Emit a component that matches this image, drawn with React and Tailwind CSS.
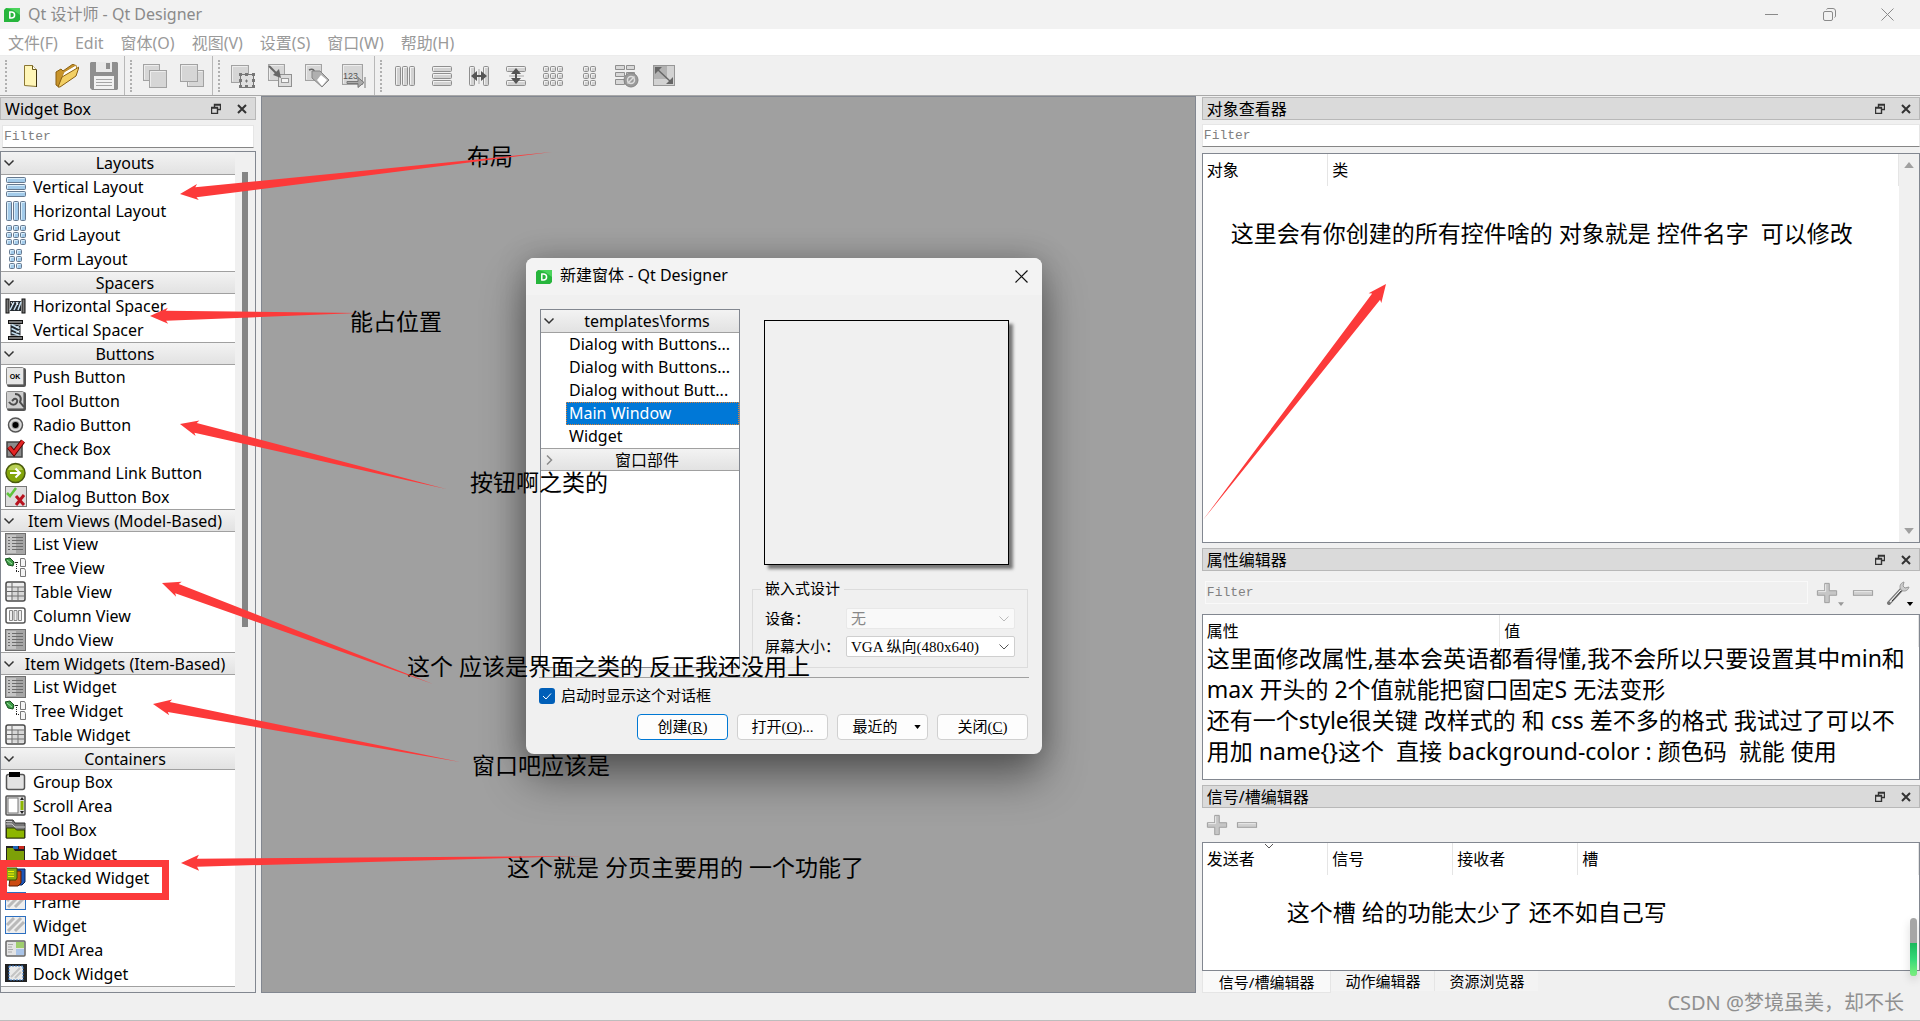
import React from 'react';

/* ---------- icons ---------- */

const Cells = ({ rects, tone = 'blue', className = 'h-5 w-5', children }) => {
  const fill = tone === 'blue' ? '#a3cbea' : '#d2d2d2';
  const light = tone === 'blue' ? '#d9edfa' : '#f2f2f2';
  const stroke = tone === 'blue' ? '#66798f' : '#8f8f8f';
  return (
    <svg viewBox="0 0 20 20" className={className} aria-hidden="true">
      {rects.map(([x, y, w, h], i) => (
        <g key={i}>
          <rect x={x + 0.5} y={y + 0.5} width={w - 1} height={h - 1} rx="1" fill={fill} stroke={stroke} />
          <path d={`M${x + 1.5} ${y + h - 1.5}V${y + 1.5}H${x + w - 1.5}`} fill="none" stroke={light} />
        </g>
      ))}
      {children}
    </svg>
  );
};

const COLUMNS = [[0, 0, 6, 20], [7, 0, 6, 20], [14, 0, 6, 20]];
const ROWS = [[0, 0, 20, 6], [0, 7, 20, 6], [0, 14, 20, 6]];
const GRID = [0, 7, 14].flatMap((y) => [0, 7, 14].map((x) => [x, y, 6, 6]));
const FORM = [0, 7, 14].flatMap((y) => [3, 10].map((x) => [x, y, 6, 6]));

const DesignerLogo = () => (
  <svg viewBox="0 0 16 14" className="h-[14px] w-4 shrink-0" aria-hidden="true">
    <path d="M2 0h14v12l-2 2H0V2z" fill="#27b53c" />
    <path d="M2 0h14v7L9 2z" fill="#4bd35c" />
    <path d="M5.8 3.5v7M5.3 4h2c4.4 0 4.4 6 0 6h-2" fill="none" stroke="#fff" strokeWidth="1.5" />
  </svg>
);

const Chevron = ({ open = true }) => (
  <svg viewBox="0 0 12 12" className="h-3 w-3" fill="none" aria-hidden="true">
    {open ? (
      <path d="M1.5 3.5L6 8l4.500-4.500" stroke="#333" strokeWidth="1.500" />
    ) : (
      <path d="M4 1.500L8.500 6L4 10.500" stroke="#8a8a8a" strokeWidth="1.500" />
    )}
  </svg>
);

const ListIcon = () => (
  <>
    <rect x="0.500" y="0.500" width="20" height="21" fill="#a6a6a6" stroke="#6e6e6e" />
    <rect x="2" y="2" width="9" height="18" fill="#c4c4c4" />
    {[4, 7, 10, 13, 16].map((y) => (
      <path key={y} d={`M3 ${y + 0.5}h2M7 ${y + 0.5}h11`} stroke="#6c6c6c" strokeWidth="1" />
    ))}
  </>
);

const TreeIcon = () => (
  <>
    <path d="M0 2l5-1 4 4-1 4-5-1z" fill="#3d9b46" stroke="#17501d" />
    <path d="M2 3l5 4" stroke="#9fe3a4" />
    <path d="M10 5.500h4M11.500 5v10M11 14.500h3" stroke="#222" strokeDasharray="1 1" />
    <path d="M15.500 1.500h4l1 2v6h-5zM15.500 11.500h4l1 2v6h-5z" fill="#f4f4f4" stroke="#777" />
  </>
);

const TableIcon = () => (
  <>
    <rect x="1" y="1" width="19" height="19" rx="2" fill="#ececec" stroke="#4a4a4a" strokeWidth="1.500" />
    <path d="M2 6h17M2 10.500h17M2 15h17M7 2v17M13 6v13" stroke="#666" />
    <path d="M7 6.500h12v12H7z" fill="#999" fillOpacity=".25" />
  </>
);

const StripedIcon = () => (
  <>
    <rect x="0.500" y="1.500" width="20" height="17" fill="#eee" stroke="#2c6fc0" />
    <path d="M2 10l7-7M3 16L16 3M10 16l9-9" stroke="#b9b9b9" strokeWidth="3" />
  </>
);

const SpacerIcon = () => (
  <>
    <rect x="1" y="4" width="3" height="14" fill="#777" stroke="#111" />
    <rect x="17" y="4" width="3" height="14" fill="#777" stroke="#111" />
    <path d="M5 6h11v10H5z" fill="#22282e" />
    <path d="M5 15l4-8M9 15l4-8M13 15l3-8" stroke="#c4dff0" strokeWidth="1.500" />
    <path d="M6 7l2 3M11 7l2 3" stroke="#fff" />
  </>
);

const widgetDrawings = {
  hspacer: <SpacerIcon />,
  vspacer: <g transform="rotate(90 10.500 11)"><SpacerIcon /></g>,
  push: (
    <>
      <rect x="2" y="2" width="19" height="19" rx="2" fill="#555" />
      <rect x="1.500" y="1.500" width="17" height="17" rx="1" fill="#e6e6e6" stroke="#888" />
      <text x="10" y="12.500" textAnchor="middle" fontSize="7" fontWeight="700" fontFamily="Liberation Sans, sans-serif">OK</text>
    </>
  ),
  tool: (
    <>
      <rect x="2" y="2" width="19" height="19" rx="2" fill="#555" />
      <rect x="1.500" y="1.500" width="17" height="17" rx="1" fill="#cfcfcf" stroke="#888" />
      <path d="M10 4c5 0 7 4 5 8l4 5M4 12c3 4 7 3 8 0 1-2-1-4-3-3l-2 2" fill="none" stroke="#4d4d4d" strokeWidth="2" />
    </>
  ),
  radio: (
    <>
      <circle cx="10.500" cy="11" r="7" fill="#d9d9d9" stroke="#555" strokeWidth="1.500" />
      <circle cx="10.500" cy="11" r="4" fill="#999" />
      <circle cx="10.500" cy="11" r="3" fill="#000" />
    </>
  ),
  check: (
    <>
      <rect x="2" y="4" width="15" height="15" fill="#8b8b8b" stroke="#444" strokeWidth="1.500" />
      <path d="M4 9l5 6 9-12" fill="none" stroke="#5b0000" strokeWidth="5" />
      <path d="M4 9l5 6 9-12" fill="none" stroke="#e32525" strokeWidth="3" />
    </>
  ),
  command: (
    <>
      <circle cx="10.500" cy="11" r="9.500" fill="#83a50a" stroke="#4a5a10" strokeWidth="1.500" />
      <path d="M3 8a8 8 0 0 1 15 0z" fill="#b8cf58" />
      <path d="M5 11h9M10.500 6.500L15 11l-4.500 4.500" fill="none" stroke="#fff" strokeWidth="2" />
    </>
  ),
  buttonbox: (
    <>
      <rect x="0.500" y="0.500" width="21" height="20" fill="#ddd" stroke="#777" />
      <path d="M2 7l3 3 6-8" fill="none" stroke="#5ec43a" strokeWidth="2.500" />
      <path d="M11 10l8 9M19 9l-8 10" stroke="#b81420" strokeWidth="3" />
    </>
  ),
  list: <ListIcon />,
  tree: <TreeIcon />,
  table: <TableIcon />,
  column: (
    <>
      <rect x="1" y="3" width="19" height="15" rx="2" fill="#fff" stroke="#555" strokeWidth="1.500" />
      <path d="M4.500 5.500h3v10h-3zM9 5.500h3v10H9zM13.500 5.500h3v10h-3z" fill="#eee" stroke="#888" />
    </>
  ),
  group: (
    <>
      <rect x="1.500" y="3.500" width="18" height="15" rx="2" fill="#e2e2e2" stroke="#555" strokeWidth="1.500" />
      <rect x="4" y="1" width="11" height="5" fill="#000" />
    </>
  ),
  scroll: (
    <>
      <rect x="1" y="1" width="19" height="19" rx="1" fill="#ddd" stroke="#555" strokeWidth="1.500" />
      <rect x="3" y="3" width="10" height="15" fill="#fff" stroke="#777" />
      <path d="M15.500 6h3v9h-3z" fill="#8db600" />
      <path d="M15 5l2-3 2 3zM15 16l2 3 2-3z" fill="#222" />
    </>
  ),
  toolbox: (
    <>
      <path d="M1 1h7l2 3h10v15H1z" fill="#777" stroke="#333" />
      <path d="M1 5h6l3 3h10M1 2.500h6" fill="none" stroke="#ccc" />
      <path d="M1.500 9h8l2 2h8v8h-18z" fill="#8db600" stroke="#2e3b05" />
    </>
  ),
  tab: (
    <>
      <path d="M1 3h19v15H1z" fill="#222" />
      <path d="M8 3h5v3H8z" fill="#1d62b5" />
      <path d="M14 3h5v3h-5z" fill="#c8281e" />
      <path d="M2 5h6l2 3h9v9H2z" fill="#7da008" />
    </>
  ),
  stacked: (
    <>
      <path d="M10 2h10v13l-3 3H8z" fill="#1c55b8" stroke="#0c2350" />
      <path d="M6 4h10v12l-3 3H4z" fill="#cc4a10" stroke="#5b1c00" />
      <path d="M1 1h11v10l-1 2H1z" fill="#86ab12" stroke="#3a4d05" />
      <path d="M3 4.500h6M3 7h6M3 9.500h6" stroke="#f2f200" />
    </>
  ),
  striped: <StripedIcon />,
  mdi: (
    <>
      <rect x="1" y="2" width="19" height="15" rx="1" fill="#e4e4e4" stroke="#666" strokeWidth="1.500" />
      <path d="M11 3h8v6h-8z" fill="#9fce6d" />
      <path d="M11 10h8v6h-8z" fill="#a9c4e8" />
      <path d="M3 5.500h5M3 8h4M3 10.500h5M3 13h4" stroke="#aaa" />
    </>
  ),
  dock: (
    <>
      <rect x="0" y="1" width="22" height="18" fill="#222" />
      <rect x="4" y="3" width="14" height="14" fill="#e9e9e9" stroke="#3a7bc8" strokeDasharray="2 1" />
      <path d="M6 14l9-9M10 15l6-6" stroke="#c4c4c4" strokeWidth="2" />
    </>
  ),
};

const layoutCells = { vlayout: ROWS, hlayout: COLUMNS, grid: GRID, form: FORM };

const WidgetIcon = ({ name }) =>
  layoutCells[name] ? (
    <Cells rects={layoutCells[name]} />
  ) : (
    <svg viewBox="0 0 22 22" className="h-[22px] w-[22px]" aria-hidden="true">
      {widgetDrawings[name]}
    </svg>
  );

const Sheet = ({ x, y, size = 17 }) => (
  <>
    <rect x={x + 0.5} y={y + 0.5} width={size} height={size} fill="#d6d6d6" stroke="#a2a2a2" />
    <path d={`M${x + 1.5} ${y + size - 0.5}V${y + 1.5}H${x + size - 0.5}`} fill="none" stroke="#ededed" />
  </>
);

const Tool = ({ children }) => (
  <svg viewBox="0 0 24 24" className="h-6 w-6" fill="none" aria-hidden="true">{children}</svg>
);

const toolGroups = [
  [
    ['New', (
      <Tool>
        <path d="M6.500 1.500h8l4 4v17l-12-1z" fill="#fff6b8" stroke="#8a7632" />
        <path d="M14.500 1.500v4h4" fill="#fffef0" stroke="#6d5a1c" />
        <path d="M18.500 6v17" stroke="#3d3210" />
      </Tool>
    )],
    ['Open', (
      <Tool>
        <path d="M1 21V8l5-3 2 2L18 0l3 2v4L4 23z" fill="#c8942a" stroke="#8a5f10" />
        <path d="M5 17L9 8 21 1l1 5z" fill="#fff" stroke="#b98a2a" />
        <path d="M3 23l4-10L24 3l-3 9L5 23z" fill="#f2cf64" stroke="#8a5f10" />
      </Tool>
    )],
    ['Save', (
      <svg viewBox="0 0 28 28" className="h-7 w-7" aria-hidden="true">
        <path d="M1 0h26l1 1v26l-1 1H2l-2-2V1z" fill="#8f8f8f" />
        <path d="M6 0h16v10H6z" fill="#e9e9e9" />
        <path d="M16 1h4v6h-4z" fill="#8f8f8f" />
        <path d="M4 14h20v13H4z" fill="#f2f2f2" />
        <path d="M6 17.500h16M6 20.500h16M6 23.500h16" stroke="#a5a5a5" />
      </svg>
    )],
  ],
  [
    ['Send to back', <Tool><Sheet x={0} y={0} size={16} /><Sheet x={6} y={6} /></Tool>],
    ['Bring to front', <Tool><Sheet x={7} y={6} size={16} /><Sheet x={0} y={0} /></Tool>],
  ],
  [
    ['Edit widgets', (
      <Tool>
        <Sheet x={0} y={1} />
        <rect x="9.500" y="10.500" width="13" height="13" fill="#e0e0e0" stroke="#777" />
        {[[8, 9], [14, 9], [21, 9], [8, 15], [21, 15], [8, 21], [14, 21], [21, 21]].map(([x, y]) => (
          <rect key={`${x}-${y}`} x={x} y={y} width="3" height="3" fill="#777" />
        ))}
        <path d="M14 17h3M15.500 15.500v3" stroke="#777" />
      </Tool>
    )],
    ['Edit signals and slots', (
      <Tool>
        <Sheet x={0} y={0} size={16} />
        <rect x="10.500" y="10.500" width="13" height="12" fill="#ddd" stroke="#909090" />
        <rect x="13.500" y="14.500" width="7" height="4" fill="#f4f4f4" stroke="#999" />
        <path d="M1 2l9 9" stroke="#666" strokeWidth="2" />
        <path d="M13 14l-2-9-6 6z" fill="#666" />
      </Tool>
    )],
    ['Edit buddies', (
      <Tool>
        <Sheet x={0} y={0} size={16} />
        <path d="M4 6c4-2 6 0 6 5" stroke="#666" strokeWidth="1.500" />
        <path d="M7 7h8l9 9-7 7-10-9z" fill="#b0b0b0" stroke="#858585" />
        <path d="M16 11l6 5-5 6-5-6z" fill="#fff" />
      </Tool>
    )],
    ['Edit tab order', (
      <Tool>
        <Sheet x={0} y={0} size={20} />
        <text x="1" y="15" fontSize="9" fill="#555" fontFamily="Liberation Sans, sans-serif">123</text>
        <path d="M5 17.500h11v-4l6 5-6 5v-4H5zM23 13v11" fill="#aaa" stroke="#777" />
      </Tool>
    )],
  ],
  [
    ['Lay out horizontally', <Cells tone="gray" rects={COLUMNS} />],
    ['Lay out vertically', <Cells tone="gray" rects={ROWS} />],
    ['Lay out horizontally in splitter', (
      <Cells tone="gray" rects={[[0, 0, 6, 20], [14, 0, 6, 20]]}>
        <path d="M10 3v15" stroke="#aaa" />
        <path d="M2 10l6-5v4h4V5l6 5-6 5v-4H8v4z" fill="#555" />
      </Cells>
    )],
    ['Lay out vertically in splitter', (
      <Cells tone="gray" rects={[[0, 0, 20, 6], [0, 14, 20, 6]]}>
        <path d="M3 10h15" stroke="#aaa" />
        <path d="M10 2l5 6h-4v4h4l-5 6-5-6h4V8H5z" fill="#555" />
      </Cells>
    )],
    ['Lay out in a grid', <Cells tone="gray" rects={GRID} />],
    ['Lay out in a form layout', <Cells tone="gray" rects={FORM} />],
    ['Break layout', (
      <Tool>
        <path d="M.5 1.500h9v4h-9zM11.500 1.500h8v4h-8zM.5 8.500h9v4h-9zM11.500 8.500h8v4h-8zM.5 15.500h9v5h-9z" fill="#d8d8d8" stroke="#8f8f8f" />
        <circle cx="16" cy="16" r="7" fill="#9a9a9a" stroke="#858585" />
        <circle cx="16" cy="16" r="3.500" stroke="#ddd" strokeWidth="1.500" />
        <path d="M12.500 19.500l7-7" stroke="#ddd" strokeWidth="1.500" />
      </Tool>
    )],
    ['Adjust size', (
      <Tool>
        <rect x="1.500" y="1.500" width="21" height="20" fill="#d2d2d2" stroke="#979797" />
        <path d="M2 2h13v13H2z" fill="#b2b2b2" />
        <path d="M5 5l14 13" stroke="#666" strokeWidth="1.500" />
        <path d="M3 3h7l-7 7zM21 20h-7l7-7z" fill="#666" />
      </Tool>
    )],
  ],
];

const PlusIcon = () => (
  <svg viewBox="0 0 24 24" className="h-[22px] w-[22px]" aria-hidden="true">
    <path d="M9.500 1.500h5v8h8v5h-8v8h-5v-8h-8v-5h8z" fill="#c6c6c6" stroke="#9a9a9a" />
    <path d="M10.500 10.500v-8M2.500 10.500h8" stroke="#eee" />
  </svg>
);

const MinusIcon = () => (
  <svg viewBox="0 0 24 24" className="h-[22px] w-[22px]" aria-hidden="true">
    <rect x="1.500" y="9.500" width="21" height="5" fill="#d0d0d0" stroke="#9a9a9a" />
    <path d="M2.500 10.500h19" stroke="#eee" />
  </svg>
);

const WrenchIcon = () => (
  <svg viewBox="0 0 24 24" className="h-6 w-6" fill="none" aria-hidden="true">
    <path d="M3 22L15 9" stroke="#777" strokeWidth="4" strokeLinecap="round" />
    <path d="M4 21L15 9" stroke="#eee" strokeWidth="1.500" />
    <path d="M6 20L16 9" stroke="#333" />
    <path d="M18 1c-4 1-5 5-3 8 3 2 7 1 8-3l-4 1-2-2z" fill="#ccc" stroke="#999" />
  </svg>
);

const DropMark = ({ className }) => (
  <svg viewBox="0 0 8 5" className={className} aria-hidden="true">
    <path d="M0 0h8L4 5z" fill="currentColor" />
  </svg>
);

/* ---------- data ---------- */

const sections = [
  ['Layouts', [['vlayout', 'Vertical Layout'], ['hlayout', 'Horizontal Layout'], ['grid', 'Grid Layout'], ['form', 'Form Layout']]],
  ['Spacers', [['hspacer', 'Horizontal Spacer'], ['vspacer', 'Vertical Spacer']]],
  ['Buttons', [
    ['push', 'Push Button'], ['tool', 'Tool Button'], ['radio', 'Radio Button'],
    ['check', 'Check Box'], ['command', 'Command Link Button'], ['buttonbox', 'Dialog Button Box'],
  ]],
  ['Item Views (Model-Based)', [
    ['list', 'List View'], ['tree', 'Tree View'], ['table', 'Table View'], ['column', 'Column View'], ['list', 'Undo View'],
  ]],
  ['Item Widgets (Item-Based)', [['list', 'List Widget'], ['tree', 'Tree Widget'], ['table', 'Table Widget']]],
  ['Containers', [
    ['group', 'Group Box'], ['scroll', 'Scroll Area'], ['toolbox', 'Tool Box'], ['tab', 'Tab Widget'], ['stacked', 'Stacked Widget'],
    ['striped', 'Frame'], ['striped', 'Widget'], ['mdi', 'MDI Area'], ['dock', 'Dock Widget'],
  ]],
  ['Input Widgets', []],
];

const menus = ['文件(F)', 'Edit', '窗体(O)', '视图(V)', '设置(S)', '窗口(W)', '帮助(H)'];

const templates = ['Dialog with Buttons...', 'Dialog with Buttons...', 'Dialog without Butt...', 'Main Window', 'Widget'];

// tip and tail of every arrow, plus half the shaft width at the head
const arrows = [
  [180, 194, 552, 152, 6],
  [150, 316, 358, 313, 6],
  [180, 424, 446, 489, 6],
  [162, 583, 433, 684, 6],
  [153, 704, 460, 762, 6],
  [181, 863, 584, 856, 5],
  [1386, 284, 1203, 520, 6],
];

const arrowPoints = ([x1, y1, x2, y2, w]) => {
  const len = Math.hypot(x2 - x1, y2 - y1);
  const ux = (x2 - x1) / len;
  const uy = (y2 - y1) / len;
  const at = (d, s) => `${(x1 + ux * d - uy * s).toFixed(1)},${(y1 + uy * d + ux * s).toFixed(1)}`;
  return [at(0, 0), at(18, 8), at(16, w - 1), at(len, 0), at(16, 1 - w), at(18, -8)].join(' ');
};

/* ---------- panels ---------- */

const DockTitle = ({ title }) => (
  <div className="flex h-[23px] shrink-0 items-center justify-between border border-[#b8b8b8] bg-[#dadada] pl-1 pr-2">
    <h2 className="leading-5">{title}</h2>
    <div className="flex gap-4">
      <button type="button" aria-label="Float">
        <svg viewBox="0 0 10 11" className="h-[11px] w-[10px]" fill="none" stroke="#333">
          <path d="M3.500 4V1.500h6v5H7M3 2h7" strokeWidth="1.400" />
          <path d="M.5 4.500h6v6h-6zM0 5h7" strokeWidth="1.400" />
        </svg>
      </button>
      <button type="button" aria-label="Close">
        <svg viewBox="0 0 10 10" className="h-[10px] w-[10px]" stroke="#333" strokeWidth="2">
          <path d="M1 1l8 8M9 1L1 9" />
        </svg>
      </button>
    </div>
  </div>
);

const FilterInput = ({ label, disabled }) => (
  <input
    type="text"
    placeholder="Filter"
    aria-label={label}
    disabled={disabled}
    className="block h-[23px] w-full min-w-0 border border-[#e6e6e6] border-b-[#868686] bg-white px-px font-['Liberation_Mono',monospace] text-[13px] placeholder:text-[#808080] disabled:border-[#f9f9f9] disabled:bg-[#f0f0f0]"
  />
);

const HeaderTable = ({ columns, sorted }) => (
  <table className="w-full table-fixed border-collapse">
    <thead>
      <tr>
        {columns.map(([name, width]) => (
          <th key={name} className={`relative h-8 border-r border-[#e5e5e5] px-1 text-left font-normal ${width}`}>
            {name}
            {sorted === name && (
              <svg viewBox="0 0 8 5" className="absolute left-1/2 top-px h-[5px] w-2" fill="none" stroke="#555">
                <path d="M0 0l4 4 4-4" />
              </svg>
            )}
          </th>
        ))}
      </tr>
    </thead>
  </table>
);

const SectionHeader = ({ title, open, first }) => (
  <button
    type="button"
    aria-expanded={open}
    className={`flex h-[23px] w-full shrink-0 items-center border-b border-[#a0a0a0] bg-linear-to-b from-[#f3f3f3] to-[#e2e2e2] pl-0.5 ${first ? '' : 'border-t'}`}
  >
    <Chevron open={open} />
    <span className="flex-1 whitespace-nowrap text-center leading-5">{title}</span>
  </button>
);

const WidgetBox = () => (
  <section className="flex min-h-0 flex-col">
    <DockTitle title="Widget Box" />
    <div className="px-0.5 pb-[3px] pt-[5px]">
      <FilterInput label="Filter widgets" />
    </div>
    <div className="flex min-h-0 flex-1 border border-[#828790] bg-white">
      <div className="min-w-0 flex-1 overflow-hidden">
        {sections.map(([title, items], index) => (
          <div key={title}>
            <SectionHeader title={title} open first={index === 0} />
            <ul>
              {items.map(([icon, name]) => (
                <li key={name} className="flex h-6 items-center gap-1.5 pl-1">
                  <span className="flex w-[22px] justify-center"><WidgetIcon name={icon} /></span>
                  <span className="leading-5">{name}</span>
                </li>
              ))}
            </ul>
          </div>
        ))}
      </div>
      <div className="flex w-5 justify-center bg-[#f0f0f0] pt-5">
        <div className="h-[455px] w-1.5 bg-[#858585]" />
      </div>
    </div>
  </section>
);

const NOTE = 'text-[23px] leading-[31px] whitespace-pre-wrap';

const ObjectInspector = () => (
  <section className="flex min-h-0 flex-1 flex-col">
    <DockTitle title="对象查看器" />
    <div className="pb-1.5 pt-1">
      <FilterInput label="Filter objects" />
    </div>
    <div className="flex flex-1 border border-[#828790] bg-white">
      <div className="min-w-0 flex-1">
        <HeaderTable columns={[['对象', 'w-[125px]'], ['类', '']]} />
        <p className={`${NOTE} pl-7 pt-8`}>这里会有你创建的所有控件啥的 对象就是 控件名字  可以修改</p>
      </div>
      <div className="flex w-5 flex-col items-center justify-between bg-[#f0f0f0] py-2 text-[#a0a0a0]">
        <DropMark className="h-1.5 w-2.5 rotate-180" />
        <DropMark className="h-1.5 w-2.5" />
      </div>
    </div>
  </section>
);

const PropertyEditor = () => (
  <section className="flex flex-col">
    <DockTitle title="属性编辑器" />
    <div className="flex items-center gap-2 py-2 pl-[3px] pr-1.5">
      <FilterInput label="Filter properties" disabled />
      <div className="flex shrink-0 items-center gap-3">
        <button type="button" aria-label="Add property" className="relative h-[27px] w-6">
          <PlusIcon />
          <DropMark className="absolute -right-1 bottom-0 h-1 w-1.5 text-[#999]" />
        </button>
        <button type="button" aria-label="Remove property"><MinusIcon /></button>
        <button type="button" aria-label="Configure" className="relative h-[27px] w-7">
          <WrenchIcon />
          <DropMark className="absolute bottom-0 right-0 h-1 w-2 text-black" />
        </button>
      </div>
    </div>
    <div className="border border-[#828790] bg-white pb-3">
      <HeaderTable columns={[['属性', 'w-[297px]'], ['值', '']]} />
      <p className={`${NOTE} -mt-1 px-1`}>
        这里面修改属性,基本会英语都看得懂,我不会所以只要设置其中min和<br />
        max 开头的 2个值就能把窗口固定S 无法变形<br />
        还有一个style很关键 改样式的 和 css 差不多的格式 我试过了可以不<br />
        用加 name{'{}'}这个  直接 background-color : 颜色码  就能 使用
      </p>
    </div>
  </section>
);

const SignalEditor = () => (
  <section className="flex flex-col">
    <DockTitle title="信号/槽编辑器" />
    <div className="flex h-[34px] items-center gap-2 pl-1">
      <button type="button" aria-label="Add connection"><PlusIcon /></button>
      <button type="button" aria-label="Remove connection"><MinusIcon /></button>
    </div>
    <div className="border border-[#828790] bg-white pb-[42px]">
      <HeaderTable
        sorted="发送者"
        columns={[['发送者', 'w-[125px]'], ['信号', 'w-[125px]'], ['接收者', 'w-[125px]'], ['槽', '']]}
      />
      <p className={`${NOTE} pl-[84px] pt-[22px]`}>这个槽 给的功能太少了 还不如自己写</p>
    </div>
    <div role="tablist" className="flex h-[22px] items-start text-[15px] leading-5">
      <button type="button" role="tab" aria-selected="true" className="h-[22px] border border-t-0 border-[#e5e5e5] bg-[#f9f9f9] px-4">信号/槽编辑器</button>
      <button type="button" role="tab" aria-selected="false" className="h-5 border-r border-[#e5e5e5] bg-[#f3f3f3] px-3.5">动作编辑器</button>
      <button type="button" role="tab" aria-selected="false" className="h-5 bg-[#f3f3f3] px-3.5">资源浏览器</button>
    </div>
  </section>
);

const Field = ({ id, label, value, disabled }) => (
  <div className="flex h-[21px] items-center">
    <label htmlFor={id} className="w-[81px] shrink-0 leading-5">{label}</label>
    <div className="relative h-[21px] flex-1">
      <select
        id={id}
        defaultValue={value}
        disabled={disabled}
        className="block h-[21px] w-full appearance-none rounded-xs border border-[#cfcfcf] bg-white pl-1 leading-4 disabled:border-[#e8e8e8] disabled:bg-[#f9f9f9] disabled:text-[#888] disabled:opacity-100"
      >
        <option>{value}</option>
      </select>
      <svg viewBox="0 0 10 6" className={`pointer-events-none absolute right-1.5 top-2 h-1.5 w-2.5 ${disabled ? 'stroke-[#bbb]' : 'stroke-[#555]'}`} fill="none">
        <path d="M.5.5L5 5 9.500.5" />
      </svg>
    </div>
  </div>
);

const DialogButton = ({ children, primary }) => (
  <button
    type="button"
    className={`flex h-[26px] w-[91px] items-center justify-center rounded border bg-[#fdfdfd] ${primary ? 'border-[#0078d4]' : 'border-[#d0d0d0]'}`}
  >
    {children}
  </button>
);

const NewFormDialog = () => (
  <div
    role="dialog"
    aria-label="新建窗体"
    className="absolute left-[526px] top-[258px] w-[516px] rounded-lg bg-[#f0f0f0] pb-3.5 shadow-[0_24px_44px_rgba(0,0,0,0.42),0_0_30px_rgba(0,0,0,0.22)]"
  >
    <div className="flex h-[37px] items-center gap-2 rounded-t-lg bg-[#f3f3f3] pl-2.5 pr-3.5">
      <DesignerLogo />
      <h1 className="flex-1 pb-1 text-base">新建窗体 - Qt Designer</h1>
      <button type="button" aria-label="Close dialog">
        <svg viewBox="0 0 13 13" className="h-[13px] w-[13px]" stroke="#111" strokeWidth="1.200"><path d="M.5.5l12 12M12.500.5l-12 12" /></svg>
      </button>
    </div>

    <div className="flex gap-3 px-3.5 pt-3.5 font-['Liberation_Serif','Noto_Sans_CJK_SC',serif] text-[15px]">
      <div className="w-[200px] shrink-0 border border-[#828790] bg-white font-['Noto_Sans','Noto_Sans_CJK_SC',sans-serif] text-base">
        <SectionHeader title="templates\forms" open first />
        <ul className="pl-[25px]">
          {templates.map((name, index) => (
            <li
              key={index}
              className={`h-[23px] whitespace-nowrap border pl-0.5 leading-[21px] ${name === 'Main Window' ? 'border-dotted border-[#e08030] bg-[#0078d7] text-white' : 'border-transparent'}`}
            >
              {name}
            </li>
          ))}
        </ul>
        <SectionHeader title="窗口部件" open={false} />
      </div>

      <div className="min-w-0 flex-1 pt-[11px]">
        <div className="ml-3 h-[245px] w-[245px] border border-black shadow-[4px_4px_3px_rgba(0,0,0,0.5)]" />
        <fieldset className="mt-3 flex flex-col gap-[7px] border border-[#dcdcdc] px-3 pb-2.5 pt-[7px]">
          <legend className="-ml-1 px-1 leading-6">嵌入式设计</legend>
          <Field id="device" label="设备：" value="无" disabled />
          <Field id="screen" label="屏幕大小：" value="VGA 纵向(480x640)" />
        </fieldset>
      </div>
    </div>

    <div className="mx-[13px] mt-[9px] border-t border-[#a0a0a0] pt-2.5 font-['Liberation_Serif','Noto_Sans_CJK_SC',serif] text-[15px]">
      <label className="flex h-4 items-center gap-1.5">
        <span className="relative h-4 w-4">
          <input type="checkbox" defaultChecked className="block h-4 w-4 appearance-none rounded-[3px] bg-[#005fb8]" />
          <svg viewBox="0 0 16 16" className="pointer-events-none absolute inset-0" fill="none" stroke="#fff"><path d="M4 8l3 3 5-5.500" /></svg>
        </span>
        启动时显示这个对话框
      </label>
      <div className="mt-2.5 flex justify-end gap-[9px] pr-px">
        <DialogButton primary>创建(<u>R</u>)</DialogButton>
        <DialogButton>打开(<u>O</u>)...</DialogButton>
        <DialogButton>
          <span className="ml-2 mr-4">最近的</span>
          <DropMark className="h-1 w-[7px]" />
        </DialogButton>
        <DialogButton>关闭(<u>C</u>)</DialogButton>
      </div>
    </div>
  </div>
);

/* hand-made notes and arrows over the window */
const Annotations = () => (
  <div className="pointer-events-none absolute inset-0 overflow-hidden text-[23px] leading-[30px] text-black">
    <p className="absolute left-[467px] top-[141px]">布局</p>
    <p className="absolute left-[350px] top-[306px]">能占位置</p>
    <p className="absolute left-[470px] top-[467px]">按钮啊之类的</p>
    <p className="absolute left-[407px] top-[651px]">这个 应该是界面之类的 反正我还没用上</p>
    <p className="absolute left-[472px] top-[750px]">窗口吧应该是</p>
    <p className="absolute left-[507px] top-[852px]">这个就是 分页主要用的 一个功能了</p>
    <svg className="absolute inset-0 h-full w-full" fill="#fc3a3a" aria-hidden="true">
      {arrows.map((arrow) => (
        <polygon key={arrow.join()} points={arrowPoints(arrow)} />
      ))}
    </svg>
    <div className="absolute left-0 top-[860px] h-10 w-[169px] border-[7px] border-[#fc3a3a]" />
  </div>
);

const App = () => (
  <div className="relative flex h-screen flex-col overflow-hidden bg-[#f0f0f0] font-['Noto_Sans','Noto_Sans_CJK_SC',sans-serif] text-base leading-6 text-black">
    <header className="flex h-[29px] shrink-0 items-center gap-2 bg-[#f2f2f2] pl-1 pr-[26px] text-[#8a8a8a]">
      <DesignerLogo />
      <span className="flex-1 pb-0.5">Qt 设计师 - Qt Designer</span>
      <div className="flex gap-[45px]">
        <button type="button" aria-label="Minimize">
          <svg viewBox="0 0 13 13" className="h-[13px] w-[13px]" stroke="#8a8a8a"><path d="M0 6.500h13" /></svg>
        </button>
        <button type="button" aria-label="Restore">
          <svg viewBox="0 0 13 13" className="h-[13px] w-[13px]" fill="none" stroke="#8a8a8a">
            <rect x=".5" y="3.500" width="9" height="9" rx="1.500" />
            <path d="M3.500 1.500q.5-1 1.500-1h5q2.500 0 2.500 2.500v5q0 1-1 1.500" />
          </svg>
        </button>
        <button type="button" aria-label="Close">
          <svg viewBox="0 0 13 13" className="h-[13px] w-[13px]" stroke="#8a8a8a"><path d="M.5.5l12 12M12.500.5l-12 12" /></svg>
        </button>
      </div>
    </header>

    <nav className="flex h-[27px] shrink-0 items-center gap-px border-b border-[#ececec] bg-white pt-0.5 text-[#9a9a9a]">
      {menus.map((name) => (
        <button key={name} type="button" className="px-2">{name}</button>
      ))}
    </nav>

    <div className="flex h-10 shrink-0 border-b border-[#a8a8a8]">
      {toolGroups.map((group, index) => (
        <div key={index} className={`flex items-center pr-0.5 ${index < 3 ? 'border-r border-[#b8b8b8]' : ''}`}>
          <div className="ml-[5px] mr-1 h-8 border-l-2 border-dotted border-[#b0b0b0]" />
          {group.map(([name, icon]) => (
            <button key={name} type="button" aria-label={name} className="flex h-8 w-[37px] items-center justify-center">
              {icon}
            </button>
          ))}
        </div>
      ))}
    </div>

    <main className="grid min-h-0 flex-1 grid-cols-[256px_minmax(0,1.3fr)_minmax(0,1fr)] grid-rows-[minmax(0,1fr)] gap-x-[5px]">
      <div className="grid min-h-0 pt-px"><WidgetBox /></div>
      <div className="border border-[#828790] bg-[#a0a0a0]" />
      <div className="flex min-h-0 flex-col gap-[5px] pl-px pt-px">
        <ObjectInspector />
        <PropertyEditor />
        <SignalEditor />
      </div>
    </main>

    <footer className="flex h-7 shrink-0 items-start justify-end border-b border-[#bdbdbd] pr-4 text-xl leading-5 text-[#8f8f8f]">
      CSDN @梦境虽美，却不长
    </footer>

    <NewFormDialog />
    <Annotations />
    <div className="absolute bottom-[45px] right-[3px] h-[58px] w-[7px] overflow-hidden rounded-full bg-[#a6a6a6] shadow-[0_4px_10px_rgba(0,0,0,0.15)]">
      <div className="mt-[25px] h-[33px] bg-linear-to-b from-[#18b85c] via-[#35d978] to-[#7bf07f]" />
    </div>
  </div>
);

export default App;
